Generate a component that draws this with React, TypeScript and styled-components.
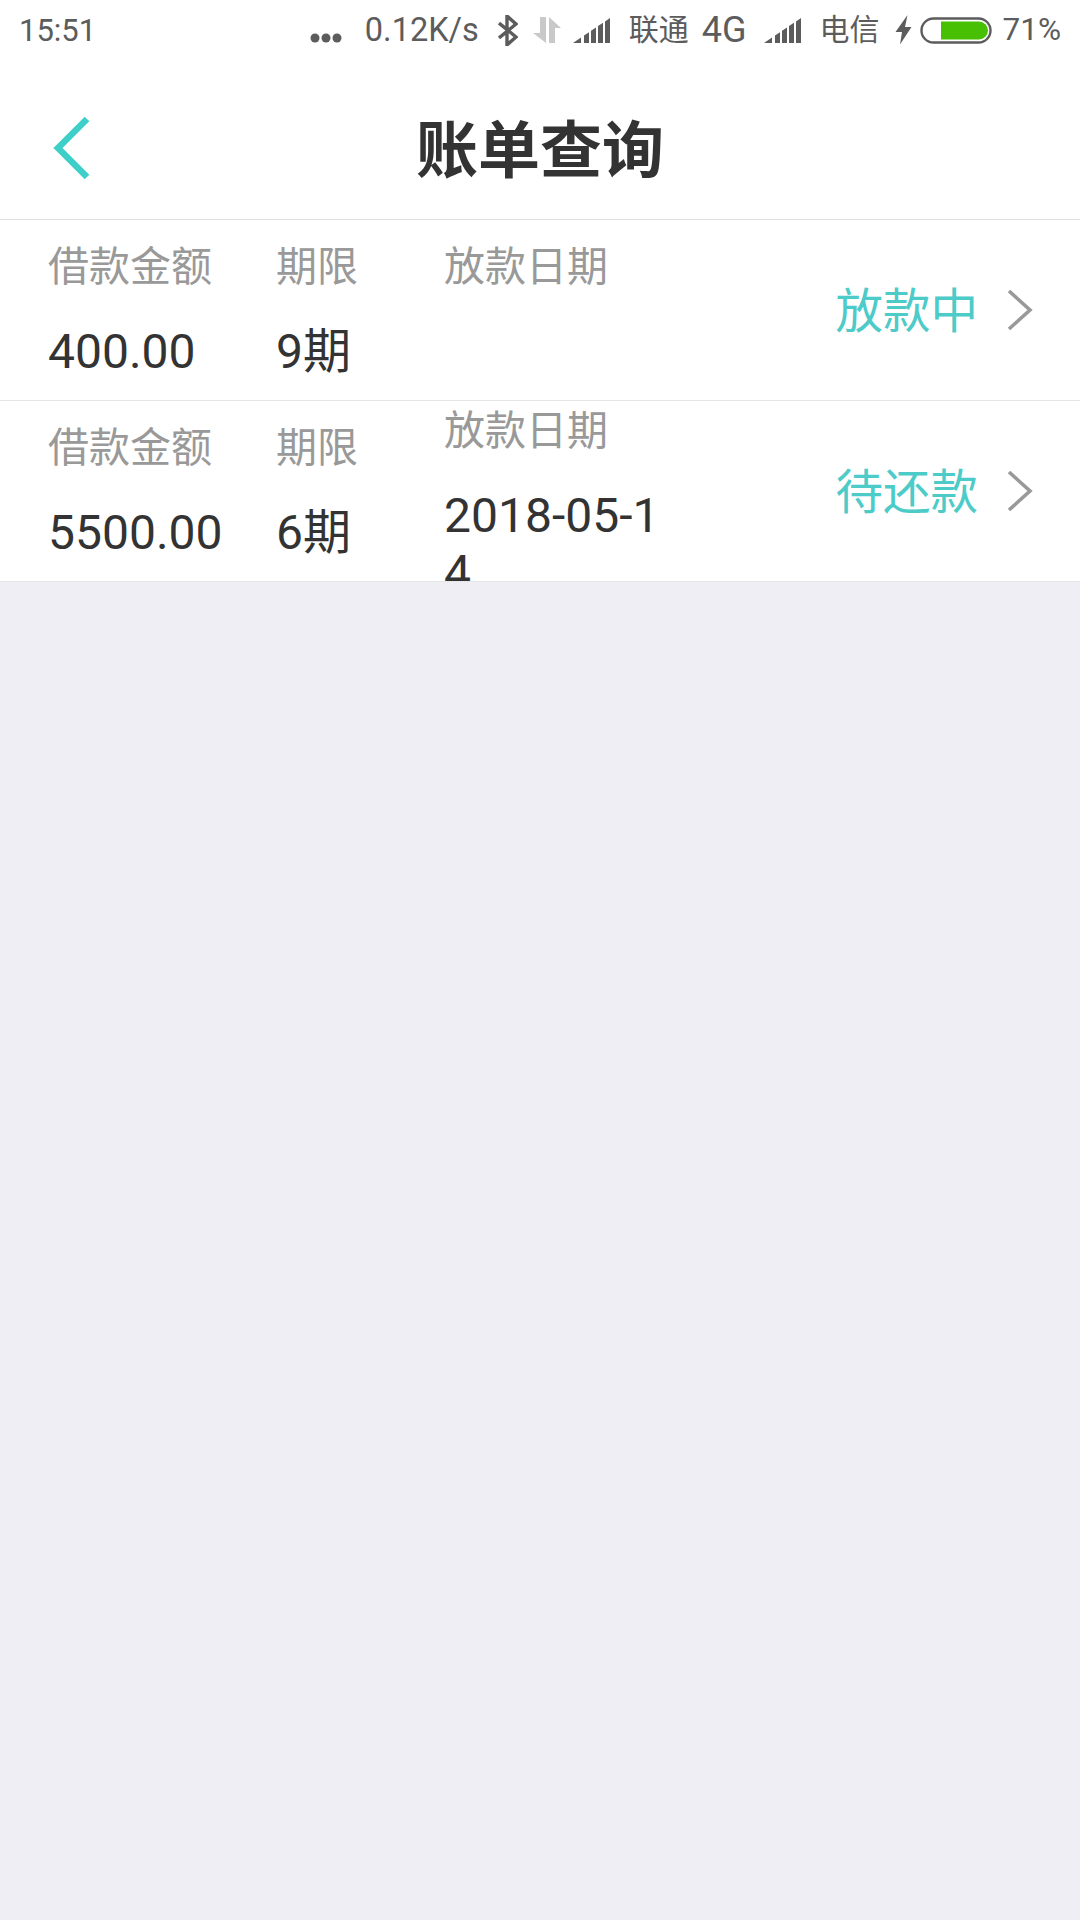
import React from "react";
import styled, { createGlobalStyle } from "styled-components";

const GlobalStyle = createGlobalStyle`
  html, body {
    margin: 0;
    padding: 0;
    background-color: #eeeef4;
    font-family: Roboto, "Noto Sans CJK SC", sans-serif;
  }
`;
const Page = styled.div`
  width: 1080px;
  height: 1920px;
  background-color: #eeeef4;
  overflow: hidden;
`;
const StatusBar = styled.div`
  height: 60px;
  background-color: #fff;
  display: flex;
  align-items: center;
  padding: 0 19px;
  color: #5c5c5c;
`;
const Clock = styled.span`
  margin-right: auto;
  font-size: 31px;
`;
const StatusText = styled.span<{ $gap?: number; $size?: number }>`
  margin-left: ${(p) => p.$gap ?? 0}px;
  font-size: ${(p) => p.$size ?? 30}px;
  line-height: 36px;
`;
const StatusIcon = styled.svg<{ $gap?: number }>`
  margin-left: ${(p) => p.$gap ?? 0}px;
  flex-shrink: 0;
`;
const Dots = styled(StatusIcon)`
  margin-top: 16px;
`;
const Header = styled.div`
  height: 135px;
  padding-top: 24px;
  background-color: #fff;
  border-bottom: 1px solid #e0e0e0;
  display: flex;
  align-items: center;
  justify-content: center;
  position: relative;
`;
const BackButton = styled.svg`
  position: absolute;
  left: 52px;
  top: 56px;
`;
const Title = styled.h1`
  margin: 0;
  font-size: 62px;
  font-weight: 600;
  color: #333;
  line-height: 80px;
`;
const Row = styled.div`
  height: 180px;
  background-color: #fff;
  border-bottom: 1px solid #e6e6e6;
  display: flex;
  align-items: flex-start;
  padding-left: 48px;
  overflow: hidden;
`;
const Cell = styled.div<{ $width: number; $raised?: boolean }>`
  width: ${(p) => p.$width}px;
  flex-shrink: 0;
  padding-top: ${(p) => (p.$raised ? 2 : 19)}px;
`;
const Label = styled.div`
  font-size: 41px;
  line-height: 56px;
  color: #999;
  white-space: nowrap;
`;
const Value = styled.div`
  margin-top: 28px;
  min-height: 57px;
  font-size: 48px;
  line-height: 57px;
  color: #333;
  word-break: break-all;
`;
const StatusLink = styled.div`
  margin-left: auto;
  height: 100%;
  display: flex;
  align-items: center;
  padding-right: 47px;
  gap: 29px;
`;
const StatusLabel = styled.span`
  font-size: 47.5px;
  color: #4ccbc8;
  margin-bottom: 6px;
`;

function SignalBars({ gap }: { gap: number }) {
  return (
    <StatusIcon $gap={gap} width="37" height="25" viewBox="0 0 37 25">
      <path
        d="M0 25 L8 19.6 V25 Z M11 25 V17.6 L16 14.2 V25 Z M18 25 V12.8 L23 9.5 V25 Z M25 25 V8 L30 4.7 V25 Z M32 25 V3.4 L37 0 V25 Z"
        fill="#5c5c5c"
      />
    </StatusIcon>
  );
}

function Chevron() {
  return (
    <svg width="26" height="42" viewBox="0 0 26 42">
      <path d="M2 2 L23 21 L2 40" fill="none" stroke="#999" strokeWidth="3.6" />
    </svg>
  );
}

interface Bill {
  amount: string;
  term: string;
  date: string;
  status: string;
  raised?: boolean;
}

const bills: Bill[] = [
  { amount: "400.00", term: "9期", date: "", status: "放款中" },
  { amount: "5500.00", term: "6期", date: "2018-05-14", status: "待还款", raised: true },
];

function BillRow({ amount, term, date, status, raised }: Bill) {
  return (
    <Row>
      <Cell $width={228}>
        <Label>借款金额</Label>
        <Value>{amount}</Value>
      </Cell>
      <Cell $width={168}>
        <Label>期限</Label>
        <Value>{term}</Value>
      </Cell>
      <Cell $width={218} $raised={raised}>
        <Label>放款日期</Label>
        <Value>{date}</Value>
      </Cell>
      <StatusLink>
        <StatusLabel>{status}</StatusLabel>
        <Chevron />
      </StatusLink>
    </Row>
  );
}

export default function App() {
  return (
    <Page>
      <GlobalStyle />
      <StatusBar>
        <Clock>15:51</Clock>
        <Dots width="32" height="10" viewBox="0 0 32 10">
          <circle cx="5" cy="5" r="4.5" fill="#5c5c5c" />
          <circle cx="16" cy="5" r="4.5" fill="#5c5c5c" />
          <circle cx="27" cy="5" r="4.5" fill="#5c5c5c" />
        </Dots>
        <StatusText $gap={23} $size={32.5}>0.12K/s</StatusText>
        <StatusIcon $gap={19} width="20" height="31" viewBox="0 0 20 31">
          <path d="M1 8 L18 22 L9 30 V1 L18 9 L1 23" fill="none" stroke="#5c5c5c" strokeWidth="3.4" />
        </StatusIcon>
        <StatusIcon $gap={15} width="28" height="26" viewBox="0 0 28 26">
          <path d="M7 0 H13 V26 L0 16 H7 Z" fill="#c9c9c9" />
          <path d="M16 0 L28 11 H22 V26 H16 Z" fill="#c9c9c9" />
        </StatusIcon>
        <SignalBars gap={12} />
        <StatusText $gap={19}>联通</StatusText>
        <StatusText $gap={13} $size={36}>4G</StatusText>
        <SignalBars gap={17} />
        <StatusText $gap={19}>电信</StatusText>
        <StatusIcon $gap={15} width="18" height="30" viewBox="0 0 18 30">
          <path d="M12.5 0 L0.5 17 H7 L5 29.5 L16.5 12 H10 Z" fill="#5c5c5c" />
        </StatusIcon>
        <StatusIcon $gap={7} width="72" height="27" viewBox="0 0 72 27">
          <rect x="1.5" y="1.5" width="69" height="24" rx="12" fill="none" stroke="#5c5c5c" strokeWidth="2.4" />
          <path d="M21 4.5 H59 A9 9 0 0 1 59 22.5 H21 Z" fill="#47bf03" />
        </StatusIcon>
        <StatusText $gap={11} $size={31.5}>71%</StatusText>
      </StatusBar>
      <Header>
        <BackButton width="40" height="64" viewBox="0 0 40 64">
          <path d="M35 3 L6 32 L35 61" fill="none" stroke="#3fcfc9" strokeWidth="6.5" />
        </BackButton>
        <Title>账单查询</Title>
      </Header>
      {bills.map((bill) => (
        <BillRow key={bill.amount} {...bill} />
      ))}
    </Page>
  );
}
